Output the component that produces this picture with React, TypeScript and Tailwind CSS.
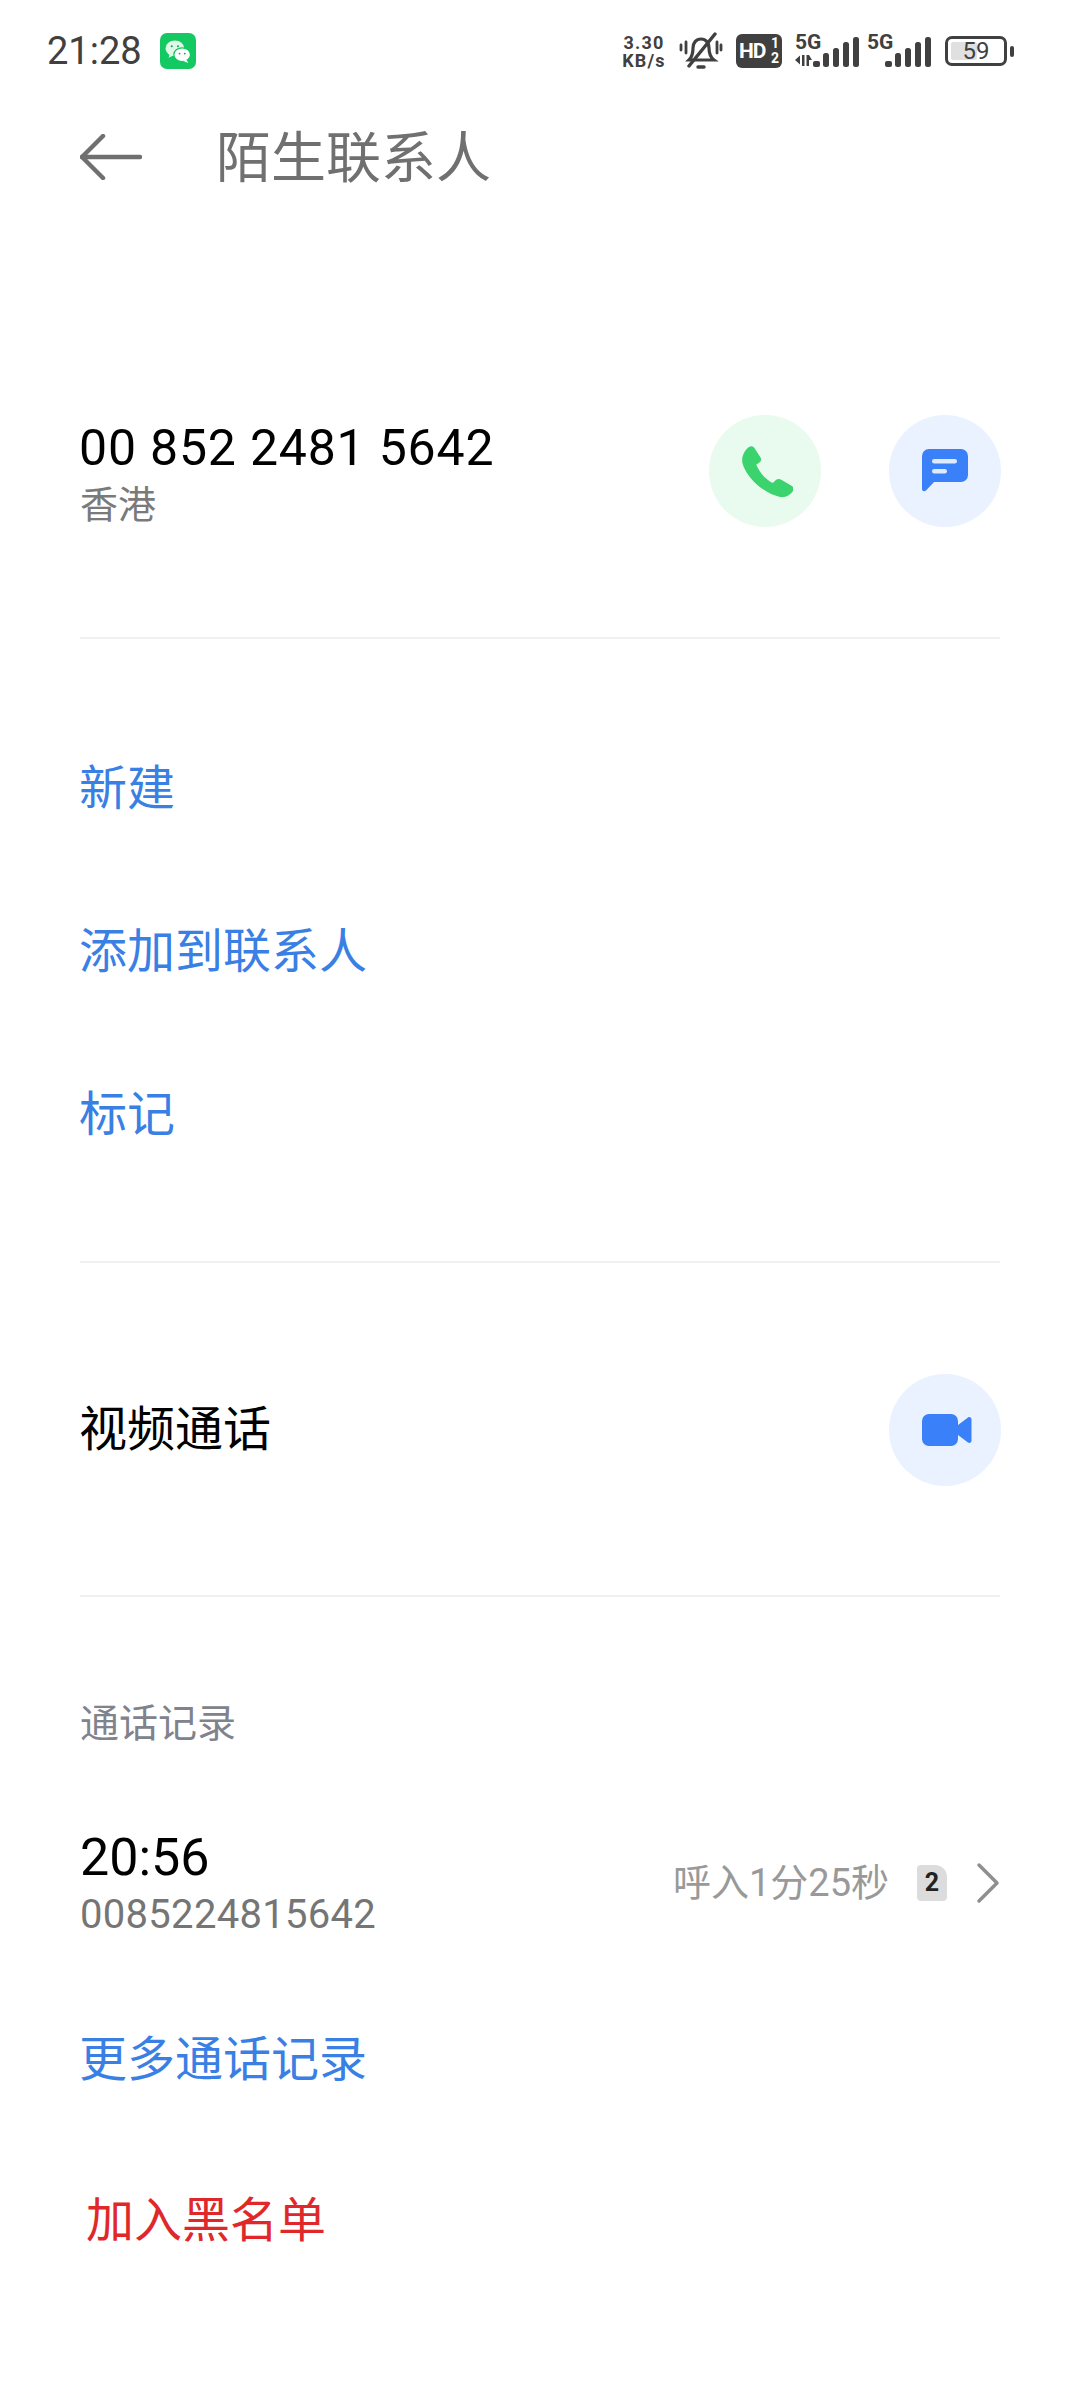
const sans = "font-['Roboto','Noto_Sans_CJK_SC',sans-serif]";

function WeChat() {
    return (
        <div className="w-[36px] h-[36px] rounded-[7px] bg-[#14c862] ml-[20px] flex items-center justify-center">
            <svg width="28" height="25" viewBox="0 0 26 24">
                <ellipse cx="10" cy="9" rx="9" ry="7.500" fill="#dff7e6" />
                <path d="M5 14l-1 4 5-2.500z" fill="#dff7e6" />
                <ellipse cx="17" cy="15" rx="8" ry="6.600" fill="#ffffff" stroke="#14c862" strokeWidth="1.200" />
                <path d="M21 20l2 3-5-2z" fill="#ffffff" />
                <circle cx="7" cy="7" r="1" fill="#0fa850" />
                <circle cx="13" cy="7" r="1" fill="#0fa850" />
                <circle cx="14.500" cy="14" r="0.900" fill="#0fa850" />
                <circle cx="19.500" cy="14" r="0.900" fill="#0fa850" />
            </svg>
        </div>
    );
}

function Bars({ arrows }: { arrows?: boolean }) {
    return (
        <div className="w-[65px] h-[34px] flex flex-col">
            <span className="text-[21px] leading-[18px] font-bold text-[#404040] mt-[-1px]">5G</span>
            <svg className="mt-[-17px]" width="65" height="34" viewBox="0 0 65 34">
                {arrows && <path d="M0 26l5-4.500v9zM7 21h2.500v11H7zM11.500 21H14l3 5h-3v6h-2.500z" fill="#404040" />}
                <rect x="18" y="27" width="7" height="6" rx="2" fill="#404040" />
                <rect x="28" y="19" width="6" height="14" rx="2.500" fill="#404040" />
                <rect x="38" y="14" width="6" height="19" rx="2.500" fill="#404040" />
                <rect x="48" y="8" width="6" height="25" rx="2.500" fill="#404040" />
                <rect x="58" y="3" width="6" height="30" rx="2.500" fill="#404040" />
            </svg>
        </div>
    );
}

function StatusBar() {
    return (
        <div className="h-[68px] pt-[33px] pl-[47px] pr-[66px] flex items-start justify-between">
            <div className="flex items-center h-[36px]">
                <span className="text-[38px] leading-[36px] text-[#404040] w-[93px]">21:28</span>
                <WeChat />
            </div>
            <div className="flex items-center h-[36px] text-[#404040]">
                <div className="text-[18px] leading-[18px] font-bold text-center w-[48px] mt-[1px] tracking-[1.2px]">
                    <div>3.30</div>
                    <div>KB/s</div>
                </div>
                <svg className="ml-[11px]" width="44" height="38" viewBox="0 0 44 38" fill="none" stroke="#404040" strokeWidth="3.400" strokeLinecap="round">
                    <path d="M10 28c3-3 4-6 4-12 0-5 3-9 8-9s8 4 8 9c0 6 1 9 5 12z" strokeWidth="3.200" />
                    <path d="M36 2L10 34" />
                    <path d="M2 13v5M7 10v11M38 10v11M42 13v5" strokeWidth="2.800" />
                    <path d="M19 35h6" />
                </svg>
                <div className="ml-[13px] w-[46px] h-[34px] rounded-[6px] bg-[#404040] relative flex items-center text-white font-bold">
                    <span className="text-[21px] leading-[34px] ml-[3px] tracking-[-1px]">HD</span>
                    <span className="absolute right-[3px] top-[2px] text-[14px] leading-[15px] text-center">1<br />2</span>
                </div>
                <div className="ml-[13px]"><Bars arrows /></div>
                <div className="ml-[7px]"><Bars /></div>
                <div className="ml-[13px] w-[62px] h-[30px] rounded-[7px] border-[3px] border-[#404040] relative flex items-center justify-center">
                    <div className="absolute left-[3px] top-[3px] bottom-[3px] w-[26px] bg-[#e0e0e0] rounded-[2px]" />
                    <span className="relative text-[24px] leading-[24px] text-[#404040]">59</span>
                </div>
                <div className="ml-[3px] w-[4px] h-[11px] rounded-[2px] bg-[#404040]" />
            </div>
        </div>
    );
}

function RoundButton({ bg, children }: { bg: string; children: React.ReactNode }) {
    return <div className={`w-[112px] h-[112px] rounded-full flex items-center justify-center ${bg}`}>{children}</div>;
}

function ActionRow({ label }: { label: string }) {
    return <div className="h-[163px] flex items-center text-[48px] leading-[64px] text-[#3a7fe4] ml-[-1px]">{label}</div>;
}

export default function App() {
    return (
        <div className={`w-[1080px] h-[2400px] bg-white overflow-hidden ${sans}`}>
            <StatusBar />

            <div className="h-[177px] pl-[80px] flex items-center">
                <svg width="62" height="46" viewBox="0 0 62 46" fill="none" stroke="#707070" strokeWidth="4.500" strokeLinecap="round" strokeLinejoin="round">
                    <path d="M23 2L2 23l21 21" />
                    <path d="M2 23h58" />
                </svg>
                <h1 className="ml-[74px] mt-[2px] text-[55px] leading-[64px] text-[#707070] font-normal">陌生联系人</h1>
            </div>

            <div className="ml-[80px] mr-[80px] h-[394px] pt-[170px] border-b-2 border-[#f0f0f0] flex justify-between items-start">
                <div>
                    <div className="text-[50px] leading-[60px] text-black mt-[3px] ml-[-1px] tracking-[0.8px]">00 852 2481 5642</div>
                    <div className="text-[38px] leading-[46px] text-[#7a7a7a] mt-[4px]">香港</div>
                </div>
                <div className="flex gap-[68px] mr-[-1px]">
                    <RoundButton bg="bg-[#e9faee]">
                        <svg className="ml-[4px]" width="52" height="52" viewBox="0 0 46 46">
                            <path d="M7.500 1.500c1.500-.9 3.300-.5 4.200 1l5.600 8.600c.9 1.400.6 3.200-.8 4.200l-3 2.200c2.600 6.600 8.400 13 14.600 16.200l2.800-2.700c1.200-1.200 3-1.300 4.400-.4l9.700 5.700c1.500.9 2 2.800 1.100 4.300-2.200 3.600-6.600 6.300-11.500 5.300C19 42.600 4.600 28 1.400 16.300 0 11 2.900 4.300 7.500 1.500z" fill="#3ad36d" />
                        </svg>
                    </RoundButton>
                    <RoundButton bg="bg-[#e9f2fe]">
                        <svg width="46" height="44" viewBox="0 0 46 44">
                            <path d="M7 0h32a7 7 0 0 1 7 7v19a7 7 0 0 1-7 7H12L4 41.500c-1.500 1.500-4 .7-4-1.500V7a7 7 0 0 1 7-7z" fill="#3a80f8" />
                            <rect x="10" y="10" width="25" height="4.500" rx="2.200" fill="#dfeafe" />
                            <rect x="10" y="20" width="15" height="4.500" rx="2.200" fill="#dfeafe" />
                        </svg>
                    </RoundButton>
                </div>
            </div>

            <div className="mx-[80px] h-[624px] pt-[68px] border-b-2 border-[#f0f0f0]">
                <ActionRow label="新建" />
                <ActionRow label="添加到联系人" />
                <ActionRow label="标记" />
            </div>

            <div className="ml-[80px] mr-[80px] h-[334px] border-b-2 border-[#f0f0f0] flex items-center justify-between pt-[1px]">
                <span className="text-[48px] leading-[64px] text-black ml-[-1px]">视频通话</span>
                <div className="mr-[-1px]">
                    <RoundButton bg="bg-[#e9f2fe]">
                        <svg className="ml-[4px]" width="50" height="32" viewBox="0 0 50 32">
                            <rect x="0" y="0" width="36" height="32" rx="7" fill="#3a80f8" />
                            <path d="M36 11l10-7.500c1.500-1 3.500 0 3.500 2v21c0 2-2 3-3.500 2L36 21z" fill="#3a80f8" />
                        </svg>
                    </RoundButton>
                </div>
            </div>

            <div className="pl-[80px] pr-[80px]">
                <div className="text-[39px] leading-[48px] text-[#80838c] mt-[103px]">通话记录</div>

                <div className="mt-[83px] h-[108px] flex items-center justify-between">
                    <div>
                        <div className="text-[52px] leading-[60px] text-black mt-[-5px]">20:56</div>
                        <div className="text-[40px] leading-[46px] text-[#757575] mt-[4px] tracking-[0.3px]">0085224815642</div>
                    </div>
                    <div className="flex items-center mt-[-5px]">
                        <span className="text-[38px] leading-[48px] text-[#999999]">呼入1分25秒</span>
                        <span className="ml-[28px] w-[30px] h-[36px] rounded-[4px] rounded-tr-[12px] bg-[#dcdcdc] flex items-center justify-center text-[25px] font-bold text-[#222222]">2</span>
                        <svg className="ml-[29px]" width="24" height="42" viewBox="0 0 24 42" fill="none" stroke="#8f8f8f" strokeWidth="3.500" strokeLinecap="round" strokeLinejoin="round">
                            <path d="M3 3l18 18L3 39" />
                        </svg>
                    </div>
                </div>

                <div className="text-[48px] leading-[64px] text-[#3a7fe4] mt-[89px] ml-[-1px]">更多通话记录</div>
                <div className="text-[48px] leading-[64px] text-[#e0282a] mt-[97px] ml-[6px]">加入黑名单</div>
            </div>
        </div>
    );
}
